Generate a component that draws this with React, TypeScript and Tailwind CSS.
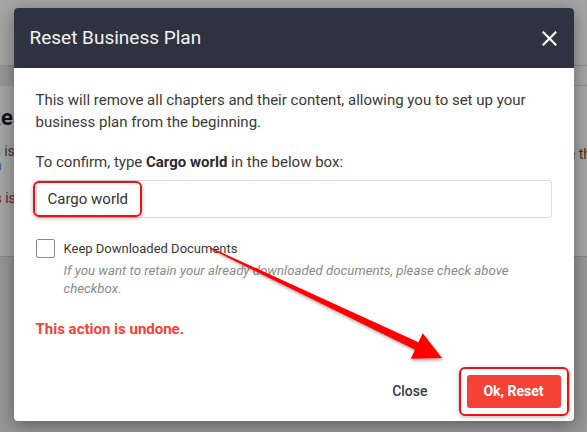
import React from 'react';

const font = { fontFamily: 'Roboto, "Noto Sans", Arial, sans-serif' };

function BackgroundPage() {
  return (
    <div className="w-[587px] h-[432px] bg-[#e8e8e8] overflow-hidden">
      <div className="h-[66px] bg-white border-b border-[#d6d6d6]" />
      <div className="flex justify-end">
        <div className="h-[20px] w-[40px] bg-white border-b border-[#d6d6d6]" />
      </div>
      <div className="h-[171px] bg-white border-b border-[#d0d0d0] flex justify-between">
        <div className="-ml-[13px] pt-[19px]">
          <div className="text-[22px] font-bold text-[#1b1b1b] leading-[26px]">Reset Business Plan</div>
          <div className="mt-[13px] -ml-[1px] text-[14px] text-[#555] leading-[14px]">
            <div className="-ml-[12px]">This is c</div>
            <div className="-ml-[20px]">retain</div>
          </div>
          <div className="mt-[16px] -ml-[12px] text-[14px] text-[#c62828]">This is a</div>
        </div>
        <div className="pt-[58px] -mr-[4px] text-[14px] text-[#6b4a2a]">use th</div>
      </div>
    </div>
  );
}

function Arrow() {
  return (
    <svg
      className="absolute left-0 top-0 pointer-events-none"
      width="587"
      height="432"
      viewBox="0 0 587 432"
    >
      <defs>
        <filter id="arrowShadow" x="-10%" y="-10%" width="120%" height="130%">
          <feDropShadow dx="1" dy="2" stdDeviation="1.6" floodColor="#000" floodOpacity="0.35" />
        </filter>
      </defs>
      <polygon
        points="210.3,247.4 418.4,342.2 422.7,333.2 442,358 410.7,358.8 415,349.8 209.7,248.6"
        fill="#ff0000"
        filter="url(#arrowShadow)"
      />
    </svg>
  );
}

export default function App() {
  return (
    <div className="relative w-[587px] h-[432px] overflow-hidden" style={font}>
      <BackgroundPage />

      <div className="absolute inset-0 bg-black/[0.35] flex justify-center pt-[8px]">
        <div className="w-[560px] h-[413px] bg-white rounded-[4px] shadow-[0_4px_18px_rgba(0,0,0,0.4)] flex flex-col overflow-hidden">
          <div className="h-[60px] bg-[#2f3340] flex items-center justify-between pl-[16px] pr-[17px]">
            <h2 className="text-[19px] text-[#f2f3f5] font-normal">Reset Business Plan</h2>
            <button className="text-white">
              <svg width="15" height="15" viewBox="0 0 15 15">
                <path d="M1.5 1.5 L13.5 13.5 M13.5 1.5 L1.5 13.5" stroke="#ffffff" strokeWidth="2.2" strokeLinecap="square" />
              </svg>
            </button>
          </div>

          <div className="flex-1 px-[22px] pt-[21px] flex flex-col">
            <p className="text-[15px] leading-[22px] text-[#3a3a3a]">
              This will remove all chapters and their content, allowing you to set up your business plan from the beginning.
            </p>
            <p className="mt-[18px] text-[15px] leading-[22px] text-[#3a3a3a]">
              To confirm, type <span className="font-bold text-[#2b2b2b]">Cargo world</span> in the below box:
            </p>
            <div className="relative mt-[7px] h-[38px] border border-[#dcdcdc] rounded-[3px] flex items-center pl-[11px] text-[15px] text-[#333]">
              Cargo world
              <div className="absolute left-[-4px] top-[0px] w-[109px] h-[36px] border-2 border-[#ee1111] rounded-[6px] shadow-[0_1px_4px_rgba(0,0,0,0.3)]" />
            </div>

            <div className="mt-[21px] flex items-start">
              <div className="w-[19px] h-[19px] border border-[#8a8a8a] rounded-[2px] shrink-0" />
              <div className="ml-[9px]">
                <div className="text-[13px] leading-[19px] text-[#3a3a3a]">Keep Downloaded Documents</div>
                <div className="mt-[4px] text-[13.25px] leading-[18px] italic text-[#8a8a8a]">
                  If you want to retain your already downloaded documents, please check above checkbox.
                </div>
              </div>
            </div>

            <div className="mt-[20px] text-[15px] font-bold text-[#f44336]">This action is undone.</div>

            <div className="mt-auto mb-[13px] flex justify-end items-center">
              <button className="text-[14px] font-medium text-[#333a44] mr-[39px]">Close</button>
              <div className="relative mr-[-9px]">
                <div className="absolute -inset-[8px] border-2 border-[#ee1111] rounded-[6px] shadow-[0_1px_4px_rgba(0,0,0,0.3)]" />
                <button className="relative w-[94px] h-[33px] bg-[#f44336] rounded-[3px] text-white text-[14px] font-bold">
                  Ok, Reset
                </button>
              </div>
            </div>
          </div>
        </div>
      </div>

      <Arrow />
    </div>
  );
}
